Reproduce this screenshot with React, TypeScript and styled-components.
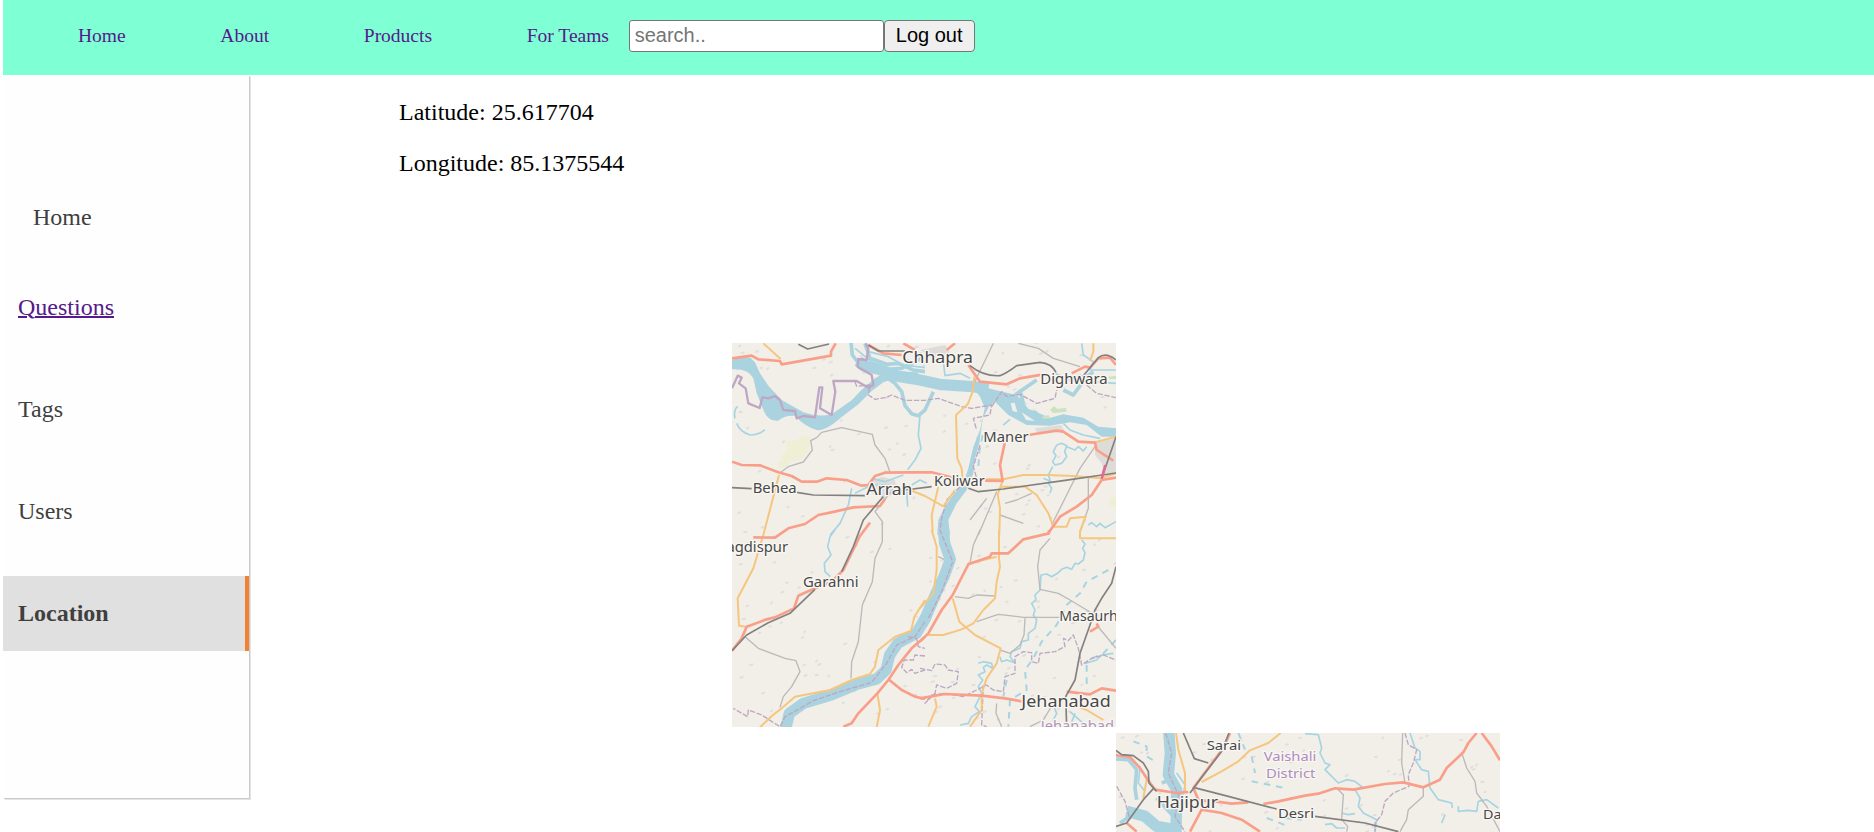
import React from 'react';
import styled, { createGlobalStyle } from 'styled-components';

const GlobalStyle = createGlobalStyle`
  html, body { margin: 0; background: #fff; overflow: hidden; }
  body { font-family: "Liberation Serif", "Times New Roman", serif; color: #000; }
`;

const Page = styled.div`
  box-sizing: border-box;
  height: 832px;
  padding-left: 3px;
  overflow: hidden;
`;

const Header = styled.nav`
  display: flex;
  align-items: center;
  height: 75px;
  padding-bottom: 3px;
  box-sizing: border-box;
  background: #7fffd4;
`;

const NavLink = styled.a`
  padding: 0 19.7px 1px 75px;
  font-size: 19.5px;
  line-height: 22px;
  color: #551a8b;
  white-space: nowrap;
`;

const SearchInput = styled.input`
  box-sizing: border-box;
  width: 255px;
  height: 32px;
  margin: 0;
  padding: 0 5px 2px;
  border: 1px solid #767676;
  border-radius: 3px;
  background: #fff;
  font: 20px "Liberation Sans", Arial, sans-serif;
  &::placeholder { color: #757575; opacity: 1; }
`;

const LogoutButton = styled.button`
  box-sizing: border-box;
  width: 91px;
  height: 32px;
  padding: 0 0 2px;
  border: 1px solid #767676;
  border-radius: 4px;
  background: #efefef;
  color: #000;
  font: 20px "Liberation Sans", Arial, sans-serif;
`;

const Body = styled.div`
  display: flex;
  align-items: flex-start;
`;

const Sidebar = styled.aside`
  display: flex;
  flex-direction: column;
  flex: none;
  gap: 27px;
  box-sizing: border-box;
  width: 246px;
  height: 723px;
  padding-top: 105px;
  background: #fefefe;
  box-shadow: 1px 1px 0 #cacaca, 2px 2px 0 #e4e4e4;
`;

const SideItem = styled.div<{ $active?: boolean; $home?: boolean }>`
  display: flex;
  align-items: center;
  flex: none;
  box-sizing: border-box;
  height: 75px;
  padding-left: ${(p) => (p.$home ? 30 : 15)}px;
  margin-bottom: ${(p) => (p.$home ? -12 : 0)}px;
  font-size: 24px;
  line-height: 27px;
  color: #3f3f3f;
  font-weight: ${(p) => (p.$active ? 700 : 400)};
  background: ${(p) => (p.$active ? '#e0e0e0' : 'transparent')};
  border-right: ${(p) => (p.$active ? '4px solid #f48031' : '0')};
`;

const VisitedLink = styled.a`
  color: #551a8b;
  text-decoration: underline;
  text-decoration-thickness: 2px;
`;

const Main = styled.main`
  flex: 1;
  padding: 24px 0 0 150px;
`;

const Coordinate = styled.p`
  margin: 0 0 24px;
  font-size: 24px;
  line-height: 27px;
`;

const TileGrid = styled.div`
  display: grid;
  grid-template-columns: 384px 384px;
  grid-template-rows: 384px 384px;
  row-gap: 6px;
  margin: 166px 0 0 333px;
`;

const Tile = styled.svg<{ $cell: number }>`
  display: block;
  width: 384px;
  height: 384px;
  grid-column: ${(p) => p.$cell};
  grid-row: ${(p) => p.$cell};
  background: #f2efe9;
`;

type Kind = 'area' | 'land' | 'green' | 'wood' | 'urban' | 'river' | 'wide' | 'stream' | 'dash' | 'border' | 'bdash' | 'minor' | 'yellow' | 'orange' | 'rail' | 'pink';
type Feature = [Kind, number, number, string];
type Label = [string, number, number, number, number, string?];

const paint: Record<Kind, React.SVGProps<SVGPathElement>> = {
  area: { fill: '#aad3df' },
  land: { fill: '#f2efe9' },
  green: { fill: '#eef0d5' },
  wood: { fill: '#cde3c0' },
  urban: { fill: '#dedcd9' },
  river: { stroke: '#aad3df', strokeWidth: 11 },
  wide: { stroke: '#aad3df', strokeWidth: 34 },
  stream: { stroke: '#a6d4e2', strokeWidth: 5 },
  dash: { stroke: '#a6d4e2', strokeWidth: 6, strokeDasharray: '20 17' },
  border: { stroke: '#bea7c4', strokeWidth: 7 },
  bdash: { stroke: '#bda7c2', strokeWidth: 4, strokeDasharray: '16 5' },
  minor: { stroke: '#bbb9b9', strokeWidth: 4 },
  yellow: { stroke: '#f6c67f', strokeWidth: 6 },
  orange: { stroke: '#f99f89', strokeWidth: 8 },
  rail: { stroke: '#838180', strokeWidth: 5 },
  pink: { stroke: '#df6d91', strokeWidth: 8 },
};

// Each feature: kind, x and y offset of its map section, path.
const westFeatures: Feature[] = [
  ['green', 0, 0, 'M183 315L210 318L238 300L256 305L252 350L225 375L198 378L185 397L160 400L156 382L175 375L170 360L185 350Z'],
  ['urban', 0, 0, 'M435 440L470 425L510 435L515 470L480 490L440 475Z'],
  ['urban', 585, 0, 'M525 322L588 310V414H555L545 385L525 360Z M345 280L425 270L430 287L350 292Z'],
  ['urban', 585, 0, 'M0 45L75 30L90 55L40 70Z'],
  ['green', 585, 0, 'M570 490L588 485V515L565 510Z'],
  ['area', 0, 0, 'M21 75Q45 62 76 68L90 82L105 115L130 152L170 195L235 232Q280 248 320 238L380 196L410 164L450 130L482 112L508 130L475 142L440 168L400 208L350 246Q300 290 275 285Q240 275 210 243Q180 240 160 257Q130 262 115 225L95 175L85 130Q70 100 21 103Z'],
  ['river', 0, 0, 'M378 22L382 60L405 90'],
  ['wide', 0, 0, 'M400 78L415 92L462 103L520 124L585 135L650 149L745 155L790 163'],
  ['area', 585, 0, 'M150 145L225 165L290 180L315 205L335 235L385 250L430 238L490 248L535 275L588 280V305L545 305L500 270L450 262L390 272L320 270L265 240L225 200L195 220L180 185Z'],
  ['river', 0, 0, 'M420 25L435 70L485 88L520 85L565 105L600 110M425 80L460 105L530 100L590 70'],
  ['stream', 0, 0, 'M390 40L440 80L510 110L580 115M430 50L490 65L535 90L600 98'],
  ['river', 0, 0, 'M475 120L510 145L530 170L540 212L560 236L580 242L600 225L625 170'],
  ['stream', 0, 0, 'M585 240L580 300L588 340L570 375L548 404M380 460L370 510L345 565L315 600M120 284Q100 300 75 300Q45 290 35 265M38 214Q25 225 30 250M440 430L480 440L535 420M390 475L440 450L490 450M545 470L548 515M560 450L585 435L605 445'],
  ['river', 585, 0, 'M285 180L350 135M240 175L270 205L320 225L380 250M300 165L310 205L355 240M430 165L460 180L500 125L520 110'],
  ['land', 585, 0, 'M272 205L284 203L292 232L278 228Z M305 232L318 240L345 258L318 255Z M313 205L330 210L345 228L325 222Z M495 275L512 283L525 298L505 293Z'],
  ['stream', 585, 0, 'M70 80L75 122L120 115L150 130M405 115L450 135L480 120L510 140L588 145M485 25L490 60L520 80L510 105L588 105M430 265L450 285L490 300L540 310M410 330L400 350L408 362L398 380L405 390L425 385L440 365L434 350L440 332L425 325L410 330M440 335L465 345L475 335L490 348L500 335M250 270L270 253M505 570L515 563L530 575L540 565L555 578L588 560M370 430L395 440M398 395L385 420L390 435L385 445L395 460L390 475'],
  ['wood', 585, 0, 'M390 225L402 213L412 222L438 218L440 230L400 235Z M366 245L385 240L392 250L370 252Z M565 125L588 122V132H568Z'],
  ['dash', 585, 0, 'M188 300L178 350L175 400'],
  ['area', 585, 0, 'M195 215L180 285L160 335L145 400L130 445L95 485L75 515L55 555L52 600H90L85 555L110 505L140 465L160 415L165 370L178 325L188 250L210 210Z'],
  ['wide', 585, 585, 'M70 -5L74 40L91 88L72 140L48 190L18 260L5 285'],
  ['wide', 0, 585, 'M604 260L574 310L518 340L494 375L483 420L455 447L398 462L318 495L235 520L193 550L180 605'],
  ['stream', 0, 585, 'M330 0L315 20L308 50L318 75L298 100L300 125L316 140'],
  ['stream', 585, 585, 'M485 30L495 42L488 55L495 68L490 90L475 102L465 100L455 118L440 112L425 118L415 128L395 140L380 132L363 135L360 180L345 195L348 210L335 220L345 240L340 255L350 270L345 295L325 310L325 330L305 335L300 355L275 365L270 380L285 398L260 390L245 395L240 380M175 400L190 395L215 400L218 415L200 405L190 412L195 425L175 435L188 450L175 470L185 490L165 530L178 545L155 560L145 580L120 585M495 400L530 390L545 375L580 370M400 525L410 550L400 570L410 590M450 545L490 580M450 590L465 550'],
  ['dash', 585, 585, 'M565 120L500 155L480 190L440 225L410 285L365 335L340 385L315 420L320 480L270 510L265 590M500 405L500 480M588 330L550 370L505 390M260 450L250 500'],
  ['border', 0, 0, 'M21 160L38 122L50 128L42 145L62 160L70 205L104 219L112 187L130 190L150 183L165 195L175 225L210 228L215 250L235 243L270 247L283 157H292L285 220L320 240L331 170L325 138L395 138L430 158L445 150L440 120L398 95L400 72L425 75L430 40L422 25'],
  ['bdash', 0, 0, 'M390 140L395 154L435 150L430 180L450 193L480 188L500 180L540 196H600L640 190L710 215L740 220L800 210L795 240L745 250L755 285'],
  ['bdash', 585, 0, 'M215 215L245 170L260 184L300 178L350 205L405 190L410 165M500 150L530 175L588 188M180 330L160 395L170 430'],
  ['bdash', 585, 0, 'M120 455L80 495L65 550L60 585L98 680L65 770L25 850'],
  ['bdash', 0, 585, 'M600 275L570 320L515 345L485 400L440 457L345 485L265 512L220 538L180 560L165 590L110 555L70 540L68 560L25 535'],
  ['bdash', 0, 585, 'M550 320L575 325L580 350L600 355M600 378L570 375L565 390L538 390L530 412L545 428L560 418L570 430L600 420'],
  ['bdash', 585, 585, 'M0 415L35 422L45 402L75 405L85 420L115 425L110 460L80 475L50 465L45 490L15 520L35 495L75 490L130 500L170 480L200 465L220 480L250 485L255 440L285 430L285 380L310 365L335 368L335 395L355 400L360 370L405 365L435 350L430 325L445 332L460 315L475 355L485 405L515 385L550 375L588 390M190 465L185 585L200 590'],
  ['minor', 0, 0, 'M164 414L190 395L235 381L262 345L257 317L275 308L290 292L350 278L442 298L450 330L480 370L495 412M515 450L450 530L472 560V620L450 670L442 740L412 810L400 920L380 980L378 1030'],
  ['minor', 585, 0, 'M220 25L155 160M295 25L355 40L400 70L480 95M525 335L480 400L440 480L395 570M505 430V520L480 590M230 470L175 600M200 490L150 555M335 475L290 495L255 505M240 540L310 565'],
  ['minor', 0, 585, 'M60 320L100 355L180 385L213 392L225 425L200 470L175 500L165 532'],
  ['minor', 585, 585, 'M180 0L160 45L150 100M390 25L360 60L353 110L360 178L415 190L450 210L500 240L530 260M105 200L145 205L170 195L225 198M55 80L72 88M170 275L235 253L310 262L440 262M315 265L312 315L300 345L270 370L240 360M230 520L228 550L245 590M400 520L370 570L330 590M530 285L588 355'],
  ['yellow', 0, 0, 'M115 25L167 72M162 420L115 600L85 700L38 790L42 872L68 876M555 465L600 483L655 514L690 465'],
  ['yellow', 585, 0, 'M520 25V50L510 78M163 125L158 170L143 208L108 240L112 370L125 400L130 455M55 455L35 540L38 590M588 305L525 322M190 433H250L310 420L380 420L460 423L540 430L588 415M248 437L233 478L240 520L238 600M240 455L315 455L350 480L385 535L400 575L440 575L450 550L497 545L480 590V610L590 610'],
  ['yellow', 585, 585, 'M35 0L50 50V120L40 190L0 235M237 0V85L240 110L230 155L225 205L190 240L160 280L125 298L70 315L25 315M98 205L118 275L165 315L242 355L230 400L200 445L185 490L185 540L150 590M45 505L50 530L25 590M450 520L500 540L550 570M230 80L180 92L145 100'],
  ['yellow', 0, 585, 'M600 210L568 260L558 303L510 320L460 360L450 410L435 432L380 450L315 480L210 500L170 535L140 558L105 592M457 490L465 540L455 592'],
  ['orange', 0, 0, 'M21 70L80 62L100 73L165 78L170 88L318 62V50L332 25M430 30L475 55L530 60M535 25L570 45'],
  ['orange', 0, 0, 'M21 380L50 390L105 391L160 412L200 423L230 440H275L305 430L365 435L410 452L430 450L450 423L480 413L545 412L620 412L690 430'],
  ['orange', 0, 0, 'M480 492L465 513L385 517L315 533L280 540L240 567L190 580L150 608L85 607'],
  ['orange', 585, 0, 'M80 45L105 25M145 90L160 112L180 140L260 148L300 130L370 118M455 115L495 95L510 98L535 70L570 68L588 90M325 300L410 287L430 290L475 320L525 323L530 345L580 377M255 320L240 390L248 438L195 437M588 428L545 435L515 480L470 515L420 545L385 594'],
  ['orange', 585, 585, 'M387 0V10L310 28L265 70L215 70L210 80L145 103L98 195L65 240L25 310L0 335M0 505L75 492L185 497L255 505L310 515M440 485L510 493L545 475L588 482M530 280L535 290L510 305'],
  ['orange', 0, 585, 'M600 320L560 355L520 405L490 450L457 490L400 550L380 580L355 590M493 450L530 480L570 500L600 507'],
  ['orange', 0, 0, 'M435 563L405 603L355 705L320 740L265 762L220 782L207 820L150 847L125 853L65 875L50 910L21 947'],
  ['rail', 0, 0, 'M220 28L248 42L312 27M21 458L80 461M215 472L265 480L420 482M500 475L540 465L620 455M475 485L415 555L385 635L350 710M270 763L195 835L130 863L65 900L21 947M430 30L460 48H540'],
  ['rail', 585, 0, 'M150 92Q190 125 240 122Q260 115 290 92L360 82Q395 85 408 112M475 140L535 68Q558 50 588 75M145 460L175 470L250 462L430 437L588 414'],
  ['rail', 585, 0, 'M588 305L552 410L545 430'],
  ['pink', 585, 0, 'M556 390L545 431'],
  ['rail', 585, 585, 'M588 110L575 160L545 205L525 240L510 285L480 370L465 450L437 500L440 590'],
];

const westLabels: Label[] = [
  ['Chhapra', 532, 83, 212, 49],
  ['Dighwara', 946, 147, 202, 41],
  ['Maner', 775, 320, 136, 41],
  ['Behea', 83, 473, 132, 41],
  ['Arrah', 424, 480, 138, 48],
  ['Koliwar', 627, 452, 152, 41],
  ['Jagdispur', -8, 650, 197, 41],
  ['Garahni', 234, 757, 167, 41],
  ['Masaurhi', 1003, 857, 186, 41],
  ['Jehanabad', 889, 1117, 268, 49],
  ['Jehanabad', 947, 1187, 220, 41, '#b295bb'],
];

const eastFeatures: Feature[] = [
  ['wide', 0, 0, 'M190 20L196 100L190 165L215 210L213 340'],
  ['river', 0, 0, 'M33 118L70 120L95 150L90 205L95 240M170 190L210 175M155 235L205 290L235 245M45 310L90 280'],
  ['wide', 0, 0, 'M65 275L120 290L155 320L210 330'],
  ['stream', 0, 0, 'M40 110L75 115L105 145L100 190L120 215M215 160L240 195L235 225'],
  ['dash', 0, 0, 'M85 65L125 80L125 110L150 125M400 40L420 90M440 110L450 160M440 185L540 205M540 295L590 300M485 295L550 320'],
  ['stream', 600, 0, 'M0 42L40 45L50 85L45 100L60 130L75 135L60 150L100 190L125 180L150 185L175 205M150 210L165 235L160 260L175 280L215 300L210 336M60 315L80 312L95 325L120 325M110 280L130 285L150 282M315 40L330 85L345 95V120L330 120L350 150L370 155L375 205L400 240L440 250L442 265M460 260V275L490 272L515 275L520 245L545 240L580 265M420 285L410 310'],
  ['bdash', 0, 0, 'M182 40L200 100L190 160L222 230L210 290L240 336M35 200L60 245L75 300'],
  ['bdash', 600, 0, 'M300 40L310 75L335 90L325 130L310 165L312 200L265 220L240 245L230 285L210 310V336'],
  ['minor', 600, 0, 'M293 40L290 130L300 190M355 205V230L310 270L305 300L285 336M470 98L485 145L510 185L515 220L545 260L585 336M100 210L115 225L110 300L128 320L125 336'],
  ['yellow', 0, 0, 'M213 40L220 90L240 160V215M527 40L490 70L435 92L400 125L350 155L290 187M125 180L115 235'],
  ['orange', 0, 0, 'M33 107L75 112L105 145L130 183L150 210L215 220L250 217M375 40L355 85L325 125L265 205L280 240L310 245M330 245L380 252L430 248M475 253L520 245L600 228L640 222L690 206L745 210L840 193L895 188L955 203L1005 180L1025 145L1075 98L1090 70L1115 40M1130 40L1160 80L1185 122M255 336L290 270L350 280L410 300L465 336M65 310L95 336'],
  ['rail', 0, 0, 'M33 92L50 105L85 108L115 130L130 155L132 190L155 215M145 207L115 240L65 310L33 320M372 40L350 95L300 160L255 220M265 203L370 230L515 268M630 290L780 310L880 336M235 40L268 117L310 130'],
];

const eastLabels: Label[] = [
  ['Sarai', 305, 91, 103, 39],
  ['Hajipur', 155, 265, 184, 49],
  ['Desri', 519, 294, 108, 39],
  ['Vaishali', 476, 123, 158, 39, '#b08dbb'],
  ['District', 483, 175, 148, 39, '#b08dbb'],
  ['Dalsinghsarai', 1134, 297, 275, 39],
];

// Faint village marks spread over the land from a fixed sequence.
const speckles = Array.from({ length: 210 }, (_, i) => {
  const x = (i * 379 + ((i * i) % 97) * 13) % 1190;
  const y = (i * 617 + ((i * i) % 71) * 17) % 1190;
  return `M${x} ${y}l${3 + (i % 5)} ${(i % 3) - 3}`;
}).join('');

function MapTile({ cell, viewBox, features, labels }: { cell: number; viewBox: string; features: Feature[]; labels: Label[] }) {
  return (
    <Tile $cell={cell} viewBox={viewBox}>
      <path d={speckles} stroke="#e0dfdd" strokeWidth="6" strokeLinecap="round" />
      {features.map(([kind, x, y, d], i) => (
        <path key={i} d={d} transform={`translate(${x} ${y})`} fill="none" strokeLinejoin="round" {...paint[kind]} />
      ))}
      {labels.map(([text, x, y, width, size, color = '#484848'], i) => (
        <text
          key={i}
          x={x}
          y={y}
          textLength={width}
          lengthAdjust="spacingAndGlyphs"
          fontFamily='"Noto Sans", sans-serif'
          fontSize={size}
          fill={color}
          stroke="#f8f6f2"
          strokeWidth="8"
          strokeLinejoin="round"
          paintOrder="stroke"
        >
          {text}
        </text>
      ))}
    </Tile>
  );
}

export default function App() {
  return (
    <Page>
      <GlobalStyle />
      <Header>
        <NavLink>Home</NavLink>
        <NavLink>About</NavLink>
        <NavLink>Products</NavLink>
        <NavLink>For Teams</NavLink>
        <SearchInput placeholder="search.." />
        <LogoutButton>Log out</LogoutButton>
      </Header>
      <Body>
        <Sidebar>
          <SideItem $home>Home</SideItem>
          <SideItem><VisitedLink>Questions</VisitedLink></SideItem>
          <SideItem>Tags</SideItem>
          <SideItem>Users</SideItem>
          <SideItem $active>Location</SideItem>
        </Sidebar>
        <Main>
          <Coordinate>Latitude: 25.617704</Coordinate>
          <Coordinate>Longitude: 85.1375544</Coordinate>
          <TileGrid>
            <MapTile cell={1} viewBox="21 24 1152 1152" features={westFeatures} labels={westLabels} />
            <MapTile cell={2} viewBox="33 40 1152 1152" features={eastFeatures} labels={eastLabels} />
          </TileGrid>
        </Main>
      </Body>
    </Page>
  );
}
